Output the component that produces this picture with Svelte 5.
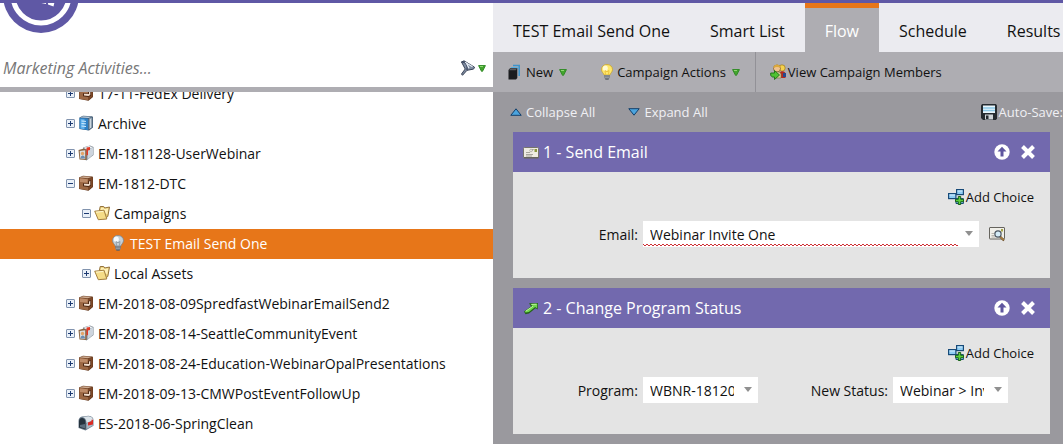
<script>
	let search = $state('');
	let selected = $state('TEST Email Send One');
	let activeTab = $state('Flow');

	const tree = [
		{ label: '17-11-FedEx Delivery', icon: 'program', level: 0, toggle: 'plus' },
		{ label: 'Archive', icon: 'archive', level: 0, toggle: 'plus' },
		{ label: 'EM-181128-UserWebinar', icon: 'event', level: 0, toggle: 'plus' },
		{ label: 'EM-1812-DTC', icon: 'program', level: 0, toggle: 'minus' },
		{ label: 'Campaigns', icon: 'folder', level: 1, toggle: 'minus' },
		{ label: 'TEST Email Send One', icon: 'bulbOff', level: 2 },
		{ label: 'Local Assets', icon: 'folder', level: 1, toggle: 'plus' },
		{ label: 'EM-2018-08-09SpredfastWebinarEmailSend2', icon: 'program', level: 0, toggle: 'plus' },
		{ label: 'EM-2018-08-14-SeattleCommunityEvent', icon: 'event', level: 0, toggle: 'plus' },
		{ label: 'EM-2018-08-24-Education-WebinarOpalPresentations', icon: 'program', level: 0, toggle: 'plus' },
		{ label: 'EM-2018-09-13-CMWPostEventFollowUp', icon: 'program', level: 0, toggle: 'plus' },
		{ label: 'ES-2018-06-SpringClean', icon: 'mailbox', level: 0 }
	];

	const tabs = ['TEST Email Send One', 'Smart List', 'Flow', 'Schedule', 'Results'];
</script>

{#snippet icon(name)}
	<svg class="icon" viewBox="0 0 16 16" width="16" height="16" aria-hidden="true">
		{#if name === 'program'}
			<path d="M1 2.500L5 .8l9.500.7.5 1v9.500l-4.500 3.700L1 14z" fill="#5f341a" />
			<path d="M1.300 2.800l8.700.9v11.500l-8.700-1.500z" fill="#9c6844" />
			<path d="M2 3.500l7.500.8v3.200L2 7z" fill="#bd8b68" />
			<path d="M10 3.700l4.600-1.700v9.800l-4.600 3.400z" fill="#7d4828" />
			<path d="M1.300 2.500L5 1.200l9.300.6L10 3.300z" fill="#cfac92" />
			<path d="M5 8.200l5 .4V6l3-.8v5.500l-3 1.300-5-.8z" fill="#4d2712" />
			<path d="M6 8.800l5 .2V6.500l1.300-.4v4l-1.800.8L6 10.400z" fill="#f0dccb" />
		{:else if name === 'archive'}
			<path d="M1.500 2.500L5 .8l9 .4 1 .8v10.500l-4 3L1.500 14z" fill="#39536b" />
			<path d="M1.500 2.800l8.700.7v11.700l-8.700-1.500z" fill="#2f80c4" />
			<path d="M2.500 4l4 .3v9.900l-4-.7z" fill="#5fb0ec" />
			<path d="M1.800 2.400L5 1.200l9 .5-3.500 1.400z" fill="#b9cbdb" />
			<path d="M10.700 3.600l3.600-1.300v10l-3.600 2.500z" fill="#8fa0b0" />
			<path d="M3.500 6l4.500.4M3.500 8.500l4.500.4M3.500 11l4.500.5" stroke="#d2ecfd" />
			<path d="M12.500 4v9" stroke="#dce4ea" stroke-width=".8" />
		{:else if name === 'event'}
			<path d="M5 2.500l7-2 3.500 1.500v8l-7 5.500-4-2z" fill="#7d8791" />
			<path d="M5 3l6-2 4 1.200-5.500 2.300z" fill="#f1f4f7" />
			<path d="M9.500 4.800l5.500-2.300v7.300l-5.500 4.700z" fill="#cdd5de" />
			<path d="M.5 5l5.500-1.500 2.500 1.500v10l-7-.5z" fill="#8b6542" />
			<path d="M1.700 6l5.500-.8v8.800l-5-.6z" fill="#d9dde0" />
			<circle cx="4.500" cy="8.500" r="1.700" fill="#e3a468" />
			<path d="M2.500 13.500c0-4 4.500-4 4.500 0z" fill="#6b8db3" />
			<path d="M8.500 2.500l3.500-.5v3l-2 .4v4.600l-1.500.5z" fill="#e23a26" />
		{:else if name === 'mailbox'}
			<path d="M4 1.500L10.500.8c3.500.2 5 2 5 4.500v5.500L7.500 15.500l-7-2.500V6c0-2.500 1.500-4.200 3.500-4.500z" fill="#6e7f8f" />
			<path d="M4.500 2L10.500 1.300c3 .2 4.500 1.700 4.500 4L8.500 8C8.500 4.500 7 2.500 4.500 2z" fill="#dce4ea" />
			<path d="M8.500 8.500L15 5.700v4.800L8.500 14z" fill="#a8b8c5" />
			<path d="M1 6.500c0-5 6.500-4.500 6.500.5v7.500L1 12.500z" fill="#25323d" />
			<path d="M2 10l5-1v4.500L2 12z" fill="#596c7c" />
			<path d="M10 7.500l3.500-1.300V4.800H15v4.700L10 10.500z" fill="#dc2922" />
		{:else if name === 'folder'}
			<path d="M5.500 5l.7-3.500h3.500l1 1.500 4.800-1-1.700 9.500-4 2.500z" fill="#e9cf78" stroke="#93713c" />
			<path d="M6.500 6L7 2.800h2.500l1 1.200 3.800-.7-1 6z" fill="#fff0b7" />
			<path d="M.7 6.200l9.300-1 2.800 8.800-8.500.7z" fill="#f5dc87" stroke="#a37f3f" />
			<path d="M2 7.200l7.300-.8" stroke="#fff7d0" />
		{:else if name === 'bulbOff' || name === 'bulbOn'}
			{@const on = name === 'bulbOn'}
			<path d="M8 .5C4.800.5 2.500 2.600 2.500 5.600c0 2.400 2 3.400 2.600 5.400h5.800c.6-2 2.600-3 2.600-5.400C13.500 2.600 11.200.5 8 .5z" fill={on ? '#ffe86b' : '#c6d0d8'} stroke={on ? '#caa52c' : '#788590'} stroke-width=".8" />
			<ellipse cx="6.300" cy="4.200" rx="2.500" ry="2.600" fill={on ? '#fffbd3' : '#f7fbff'} />
			<path d="M6.500 10.500L6 6.500l2 1.300 2-1.300-.5 4" fill="none" stroke={on ? '#e5b529' : '#7d8b97'} stroke-width=".7" />
			<path d="M5.300 11h5.400v2.500L9.500 15.800h-3l-1.200-2.300z" fill="#5a6068" />
			<path d="M5.500 12h5M5.500 13.800h5" stroke="#cfd3d8" stroke-width=".7" />
		{:else if name === 'funnel'}
			<path d="M1.500 2L4 .8l10.500 6.400c0 1.300-.8 2-2.500 2.200L7 10.300l-4.500 5-1-1.300 3.700-5z" fill="#7f8ca2" stroke="#3a4457" />
			<path d="M1.500 2c4-.5 6.500 3 5.500 8.200" fill="none" stroke="#354058" stroke-width="1.300" />
			<path d="M5 2.200l7.500 4.600M6.500 3.500L9 8.300" stroke="#e8eef5" stroke-width="1.300" />
		{:else if name === 'new'}
			<path d="M5 1.500h6.200v10.500" fill="none" stroke="#3d94cc" stroke-width="1.600" />
			<path d="M3 3.500h6.500v1.500" fill="none" stroke="#5aaedf" />
			<path d="M.5 6L2 4.300h7.300v9.700L8 15.500H.5z" fill="#1b1c1f" />
			<path d="M1 6.200l1.300-1.400h6.500L7.700 6.200z" fill="#5c5d61" />
		{:else if name === 'members'}
			<circle cx="12" cy="4" r="3.200" fill="#f4d24c" stroke="#9b751f" stroke-width=".7" />
			<path d="M9.500 14V9c1-2.500 6-2.500 6 1v4z" fill="#b32a20" />
			<path d="M13 9h3v4h-3z" fill="#27488e" />
			<circle cx="7" cy="4.500" r="3.500" fill="#f0c38e" stroke="#7a4c24" stroke-width=".7" />
			<path d="M3.300 4c0-4.800 7.400-4.800 7.400 0-2-1.500-5.400-1.500-7.400 0z" fill="#dba93c" />
			<path d="M3 12v-2c1-3 7-3 8 0v4H6z" fill="#d8cf9a" stroke="#7d743b" stroke-width=".6" />
			<path d="M.7 9h3.800V6.500l5 4.500-5 4.500V13h-2L.7 11.500z" fill="#4ec333" stroke="#1e6f17" stroke-width=".9" />
		{:else if name === 'save'}
			<path d="M0 1.200L1.200 0h13.600L16 1.200v13.600L14.800 16H2l-2-2z" fill="#252b30" />
			<rect x="2" y="1.500" width="12" height="7.500" fill="#e9f6fc" />
			<path d="M2 4h12M2 6.500h12" stroke="#8bc8e6" stroke-width="1.300" />
			<rect x="4" y="10.500" width="8" height="5" fill="#cfd5d9" />
			<rect x="5" y="11.500" width="2.500" height="3.500" fill="#252b30" />
		{:else if name === 'email'}
			<rect x=".5" y="3.500" width="15" height="10.500" rx="1" fill="#eeebe2" stroke="#77746d" />
			<path d="M1 13.700h14.500" stroke="#57544e" />
			<path d="M3 8.500h4M3 10.500h7M3 12h6" stroke="#96938b" stroke-width=".8" />
			<circle cx="8" cy="6.500" r="1.300" fill="none" stroke="#a5a199" stroke-width=".7" />
			<path d="M9 6l1.500-.5" stroke="#88857d" />
			<rect x="11.500" y="5" width="2.500" height="3" fill="#8a963d" />
		{:else if name === 'status'}
			<path d="M6 3.300l9-.3-.3 6.500-2.200-1.300L6 13.500l-3.500.7L1 11.500l7-5z" fill="#25641a" />
			<path d="M7.500 4l6.800-.3-.3 4.500-1.900-1.100L5.800 12l-3.300.5-.7-1.200L9.500 6z" fill="#6fd74b" />
			<path d="M8.500 4.400l5-.2M3 11l7-4.800" stroke="#c4f5a5" stroke-width=".9" />
		{:else if name === 'choice'}
			<rect x=".6" y="4.600" width="7.300" height="5" fill="#8fcdf5" stroke="#174a78" stroke-width="1.200" />
			<rect x="8.600" y=".6" width="6.800" height="5" fill="#8fcdf5" stroke="#174a78" stroke-width="1.200" />
			<path d="M1.500 6h5.500M9.500 2h5" stroke="#d6effd" />
			<path d="M8 14.500V9.600h7.400v4.900z" fill="#8fcdf5" stroke="#174a78" />
			<path d="M10.300 7.500h2.400v2.800h2.800v2.400h-2.800v2.800h-2.400v-2.800H7.500v-2.400h2.800z" fill="#5cd03c" stroke="#17611a" />
		{:else if name === 'preview'}
			<rect x=".5" y="1.500" width="15" height="11.500" rx=".5" fill="#f0efe9" stroke="#66645e" />
			<path d="M2.500 7.500h3M2.500 9.500h3M2.500 11h4" stroke="#aaa79f" stroke-width=".8" />
			<rect x="12" y="3" width="2" height="2.500" fill="#a2a244" />
			<path d="M11 10.500l4 4" stroke="#6b4a20" stroke-width="2.200" />
			<path d="M11.500 11l3 3" stroke="#d9a85c" />
			<circle cx="9" cy="8" r="3.100" fill="#d5ecf7" stroke="#4a5560" stroke-width="1.200" />
		{:else if name === 'up'}
			<circle cx="8" cy="8" r="7.700" fill="#fff" />
			<path d="M8 2.800l4.500 4.700h-3v5h-3v-5h-3z" fill="#5f569f" />
		{:else if name === 'close'}
			<path d="M2.500 2.500l11 11M13.500 2.500l-11 11" stroke="#fff" stroke-width="4" />
		{/if}
	</svg>
{/snippet}

{#snippet arrow()}
	<svg class="arrow" viewBox="0 0 8 7" width="8" height="7" aria-hidden="true">
		<path d="M.6.6h6.800L4.500 6.300h-1z" fill="#43a52d" stroke="#2f8a24" />
		<path d="M2 1.500h3" stroke="#8fd672" />
	</svg>
{/snippet}

{#snippet stepHeader(title, iconName)}
	<header class="step-header">
		{@render icon(iconName)}
		<h2>{title}</h2>
		<button type="button" aria-label="Move up">{@render icon('up')}</button>
		<button type="button" aria-label="Remove">{@render icon('close')}</button>
	</header>
{/snippet}

{#snippet addChoice()}
	<button type="button" class="add-choice">{@render icon('choice')}Add Choice</button>
{/snippet}

<div class="app">
	<svg class="badge" viewBox="0 0 76 33" width="76" height="33" aria-hidden="true">
		<circle cx="38" cy="-5" r="38" fill="#5f58a5" />
		<circle cx="38" cy="-5" r="28" fill="none" stroke="#fff" stroke-width="5" />
		<path d="M16 0h8v1.500l-8-1zM26 0h8v2.500l-8-1.500zM36 0h7v4l-7-1.500zM45 0h7l-1.500 6.500-5.500-2z" fill="#fff" />
	</svg>

	<div class="columns">
		<aside class="sidebar">
			<div class="search">
				<input type="text" aria-label="Search" placeholder="Marketing Activities..." bind:value={search} />
				<button type="button" aria-label="Filter">{@render icon('funnel')}{@render arrow()}</button>
			</div>
			<div class="tree-wrap">
				<ul class="tree">
					{#each tree as node}
						<li class="level-{node.level}" class:selected={selected === node.label}>
							{#if node.toggle}
								<button type="button" class="toggle" aria-label="Toggle {node.label}">
									<svg viewBox="0 0 9 9" width="9" height="9" aria-hidden="true">
										<rect x=".5" y=".5" width="8" height="8" rx=".5" fill="#e9f0f8" stroke="#8193ae" />
										<path d={node.toggle === 'plus' ? 'M2 4.500h5M4.500 2v5' : 'M2 4.500h5'} stroke="#1c3a72" />
									</svg>
								</button>
							{:else}
								<span class="toggle"></span>
							{/if}
							<button type="button" class="node" onclick={() => (selected = node.label)}>
								{@render icon(node.icon)}{node.label}
							</button>
						</li>
					{/each}
				</ul>
			</div>
		</aside>

		<main class="main">
			<nav class="tabs">
				{#each tabs as tab}
					<button type="button" class:active={activeTab === tab} onclick={() => (activeTab = tab)}>{tab}</button>
				{/each}
			</nav>

			<div class="toolbar">
				<button type="button" class="new">{@render icon('new')}New{@render arrow()}</button>
				<button type="button" class="actions">{@render icon('bulbOn')}Campaign Actions{@render arrow()}</button>
				<button type="button" class="members">{@render icon('members')}View Campaign Members</button>
			</div>

			<div class="flow-bar">
				<button type="button">
					<svg viewBox="0 0 12 8" width="12" height="8" aria-hidden="true">
						<path d="M6 .8L11.200 7.300H.8z" fill="#4ba4de" stroke="#123f6b" />
					</svg>
					Collapse All
				</button>
				<button type="button">
					<svg viewBox="0 0 12 8" width="12" height="8" aria-hidden="true">
						<path d="M6 7.200L.8.700h10.400z" fill="#4ba4de" stroke="#123f6b" />
					</svg>
					Expand All
				</button>
				<span class="auto-save">{@render icon('save')}Auto-Save:</span>
			</div>

			<section class="step">
				{@render stepHeader('1 - Send Email', 'email')}
				<div class="step-body">
					{@render addChoice()}
					<div class="fields">
						<label for="email">Email:</label>
						<select id="email" class="wide">
							<option>Webinar Invite One</option>
						</select>
						<button type="button" class="preview" aria-label="Preview">{@render icon('preview')}</button>
					</div>
				</div>
			</section>

			<section class="step">
				{@render stepHeader('2 - Change Program Status', 'status')}
				<div class="step-body">
					{@render addChoice()}
					<div class="fields">
						<label for="program">Program:</label>
						<select id="program">
							<option>WBNR-18120</option>
						</select>
						<label for="status" class="second">New Status:</label>
						<select id="status">
							<option>Webinar &gt; Invited</option>
						</select>
					</div>
				</div>
			</section>
		</main>
	</div>
</div>

<style>
	:global(body) {
		margin: 0;
		background: #fff;
	}

	.app {
		position: relative;
		box-sizing: border-box;
		height: 100vh;
		border-top: 3px solid #5f58a5;
		overflow: hidden;
		font-family: 'Open Sans', 'Noto Sans', sans-serif;
		font-size: 14px;
		color: #111;
	}

	button {
		display: flex;
		align-items: center;
		padding: 0;
		border: none;
		background: none;
		font: inherit;
		color: inherit;
		white-space: nowrap;
		cursor: pointer;
	}

	svg {
		display: block;
		flex: none;
	}

	/* Logo hangs over the top border */
	.badge {
		position: absolute;
		top: -3px;
		left: 3px;
	}

	.columns {
		display: flex;
		height: 100%;
	}

	/* Sidebar */
	.sidebar {
		display: flex;
		flex-direction: column;
		flex: 0 0 493px;
	}

	.search {
		display: flex;
		align-items: center;
		padding: 46px 7px 0 3px;
		border-bottom: 5px solid #aeadb2;
	}

	.search input {
		flex: 1;
		min-width: 0;
		height: 38px;
		padding: 0;
		border: none;
		outline: none;
		font: italic 16px 'Open Sans', 'Noto Sans', sans-serif;
	}

	.search input::placeholder {
		color: #777;
	}

	.search button {
		gap: 2px;
	}

	.tree-wrap {
		flex: 1;
		min-height: 0;
		overflow: hidden;
	}

	/* List is scrolled part of a row down */
	.tree {
		margin: -13px 0 0;
		padding: 0;
		list-style: none;
	}

	.tree li {
		display: flex;
		align-items: center;
		box-sizing: border-box;
		height: 30px;
		padding-bottom: 2px;
		padding-left: 66px;
	}

	.tree .level-1 {
		padding-left: 82px;
	}

	.tree .level-2 {
		padding-left: 98px;
	}

	.tree .selected {
		background: #e77619;
		color: #fff;
	}

	.toggle {
		width: 9px;
		margin-right: 3px;
	}

	.node {
		gap: 4px;
	}

	/* Main area */
	.main {
		flex: 1;
		min-width: 0;
		overflow: hidden;
		background: #9a999e;
	}

	.tabs {
		display: flex;
		height: 49px;
		background: #ebebf0;
	}

	.tabs button {
		padding: 2px 20px 0;
		border-top: 5px solid transparent;
		font-size: 16px;
	}

	.tabs .active {
		border-top-color: #e77619;
		background: #aeadb2;
		color: #fff;
	}

	.toolbar {
		display: flex;
		height: 40px;
		background: #aeadb2;
		font-size: 13px;
	}

	.toolbar .icon {
		margin-right: 2px;
	}

	.toolbar .arrow {
		margin-left: 6px;
	}

	.toolbar .new {
		padding: 0 16px 0 15px;
	}

	.toolbar .actions {
		padding: 0 15px 0 16px;
	}

	.toolbar .members {
		padding: 0 14px;
		border-left: 1px solid #929197;
	}

	.flow-bar {
		display: flex;
		align-items: center;
		gap: 33px;
		height: 40px;
		padding-left: 17px;
		font-size: 13px;
		color: #f0f0f4;
	}

	.flow-bar button {
		gap: 4px;
	}

	.auto-save {
		display: flex;
		align-items: center;
		gap: 2px;
		margin-left: auto;
		white-space: nowrap;
	}

	/* Flow steps */
	.step {
		margin: 0 13px 10px 20px;
		background: #e4e4e4;
	}

	.step-header {
		display: flex;
		align-items: center;
		height: 40px;
		padding: 0 14px 0 10px;
		background: #7269ae;
		color: #fff;
	}

	.step-header h2 {
		flex: 1;
		margin: 0 0 0 4px;
		font-size: 16px;
		font-weight: 400;
	}

	.step-header button {
		margin-left: 10px;
	}

	.step-body {
		padding: 15px 16px 31px 0;
	}

	.add-choice {
		gap: 2px;
		height: 20px;
		margin: 0 0 14px auto;
		font-size: 13px;
	}

	.fields {
		display: flex;
		align-items: center;
	}

	label {
		width: 125px;
		margin-right: 5px;
		text-align: right;
	}

	.second {
		margin-left: 5px;
	}

	select {
		width: 115px;
		height: 26px;
		padding: 0 24px 0 7px;
		border: none;
		border-radius: 0;
		outline: none;
		appearance: none;
		background: #fff url("data:image/svg+xml,%3Csvg xmlns='http://www.w3.org/2000/svg' width='8' height='5'%3E%3Cpath d='M0 0h8L4 5z' fill='%23909090'/%3E%3C/svg%3E") no-repeat right 6px top 10px;
		font: inherit;
		color: inherit;
	}

	/* Spell check squiggle runs up to the arrow */
	.wide {
		flex: 1;
		min-width: 0;
		background:
			url("data:image/svg+xml,%3Csvg xmlns='http://www.w3.org/2000/svg' width='8' height='5'%3E%3Cpath d='M0 0h8L4 5z' fill='%23909090'/%3E%3C/svg%3E") no-repeat right 6px top 10px,
			linear-gradient(#fff, #fff) no-repeat right / 21px 100%,
			url("data:image/svg+xml,%3Csvg xmlns='http://www.w3.org/2000/svg' width='4' height='4'%3E%3Cpath d='M-1 0l3 3 3-3' fill='none' stroke='%23c8141c' stroke-width='.9'/%3E%3C/svg%3E") repeat-x left bottom,
			#fff;
	}

	.preview {
		margin: 0 29px 0 10px;
	}
</style>
